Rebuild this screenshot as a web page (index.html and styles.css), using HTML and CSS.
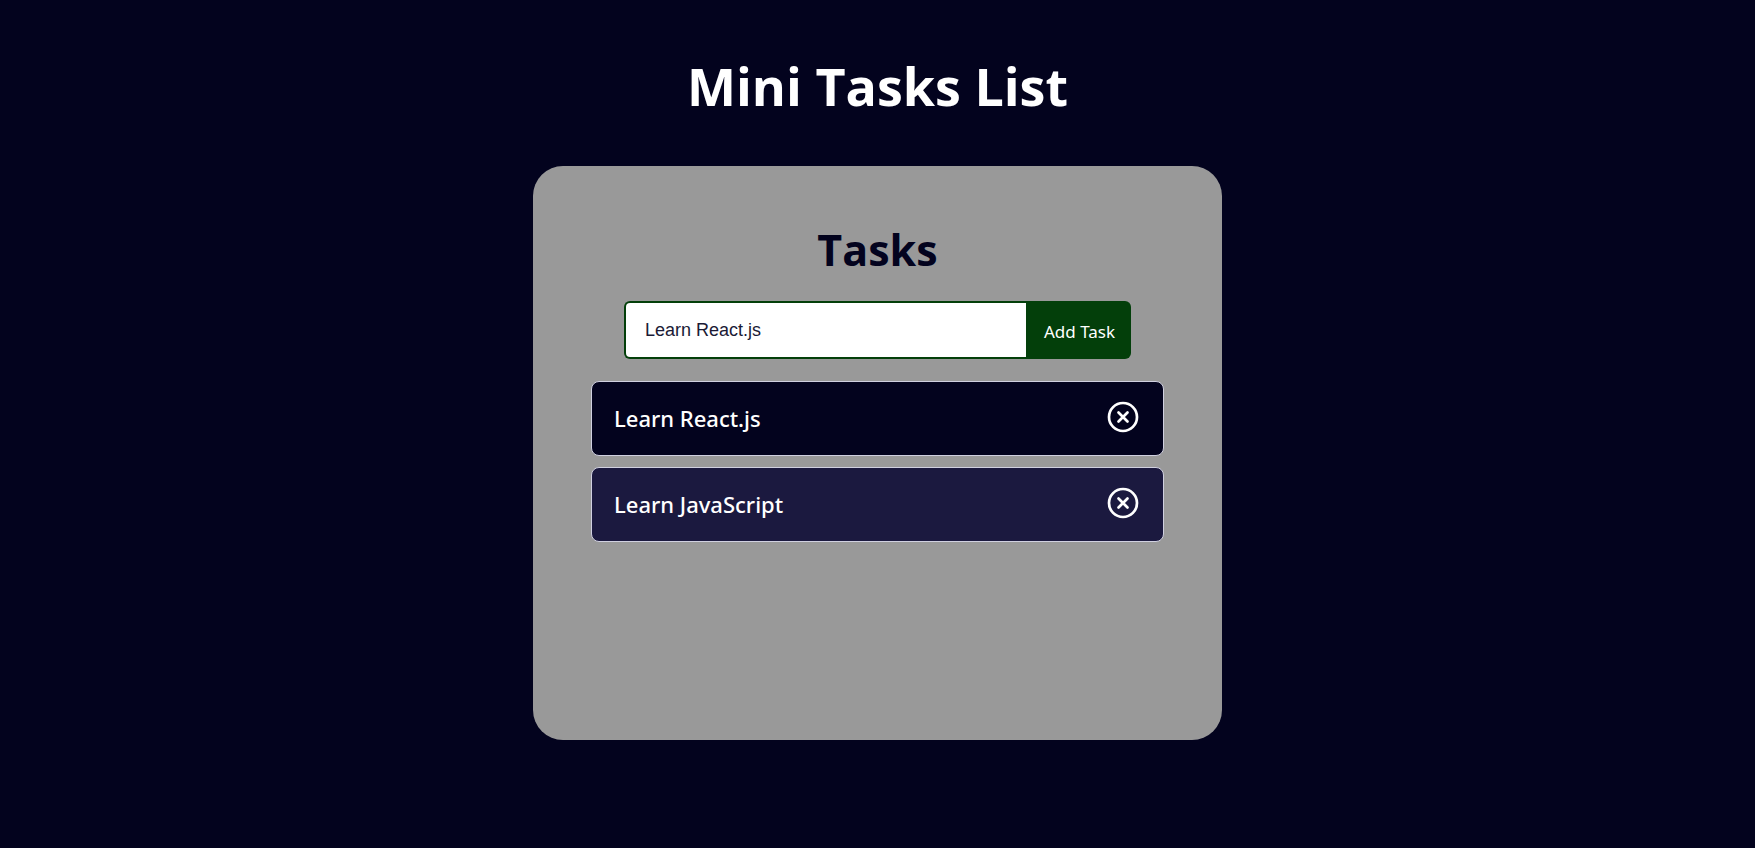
FILE: index.html
```html
<!DOCTYPE html>
<html lang="en">
<head>
<meta charset="utf-8">
<meta name="viewport" content="width=device-width, initial-scale=1">
<title>Mini Tasks List</title>
<link rel="stylesheet" href="styles.css">
</head>
<body>
<main class="app">
  <h1 class="app-title">Mini Tasks List</h1>
  <section class="card">
    <h2 class="card-title">Tasks</h2>
    <form class="task-form">
      <input class="task-input" type="text" value="Learn React.js" aria-label="New task">
      <button class="add-button" type="submit">Add Task</button>
    </form>
    <ul class="task-list">
      <li class="task">
        <span class="task-name">Learn React.js</span>
        <button class="remove-button" type="button" aria-label="Remove Learn React.js">
          <svg class="remove-icon" viewBox="0 0 32 32" aria-hidden="true"><circle cx="16" cy="16" r="14"/><path d="M11.5 11.5l9 9M20.5 11.5l-9 9"/></svg>
        </button>
      </li>
      <li class="task task-alt">
        <span class="task-name">Learn JavaScript</span>
        <button class="remove-button" type="button" aria-label="Remove Learn JavaScript">
          <svg class="remove-icon" viewBox="0 0 32 32" aria-hidden="true"><circle cx="16" cy="16" r="14"/><path d="M11.5 11.5l9 9M20.5 11.5l-9 9"/></svg>
        </button>
      </li>
    </ul>
  </section>
</main>
</body>
</html>
```
FILE: styles.css
```css
* {
  box-sizing: border-box;
}

body {
  margin: 0;
  min-height: 100vh;
  background: #03031e;
  font-family: "Segoe UI", "Open Sans", "Noto Sans", sans-serif;
}

.app {
  display: flex;
  flex-direction: column;
  align-items: center;
  padding: 50px 20px;
}

.app-title {
  margin: 0 0 44px;
  color: #fff;
  font-size: 52px;
  line-height: 72px;
}

.card {
  width: 100%;
  max-width: 689px;
  min-height: 574px;
  padding: 54px 58px;
  border-radius: 30px;
  background: #999;
}

.card-title {
  margin: 0 0 21px;
  color: #03031e;
  font-size: 43px;
  line-height: 60px;
  text-align: center;
}

.task-form {
  display: flex;
  height: 58px;
  margin: 0 33px 22px;
}

.task-input {
  flex: 1;
  min-width: 0;
  padding: 0 19px;
  border: 2px solid #033f0a;
  border-right: 0;
  border-radius: 6px 0 0 6px;
  background: #fff;
  color: #1a1a35;
  font: 18px "Liberation Sans", Arial, sans-serif;
}

.add-button {
  padding: 2px 16px 0 18px;
  border: 0;
  border-radius: 0 6px 6px 0;
  background: #033f0a;
  color: #fff;
  font: 17px "Noto Sans", sans-serif;
}

.task-list {
  display: grid;
  gap: 11px;
  margin: 0;
  padding: 0;
  list-style: none;
}

.task {
  display: flex;
  align-items: center;
  justify-content: space-between;
  min-height: 75px;
  padding: 0 24px 4px 22px;
  border: 1px solid #d0d0e0;
  border-radius: 8px;
  background: #03031e;
  color: #fff;
}

.task-alt {
  background: #1b193f;
}

.task-name {
  padding-top: 2px;
  font: 500 22px "Noto Sans", sans-serif;
}

.remove-button {
  display: flex;
  padding: 0;
  border: 0;
  background: none;
  color: inherit;
}

.remove-icon {
  width: 32px;
  height: 32px;
  fill: none;
  stroke: currentColor;
  stroke-width: 2.7;
  stroke-linecap: round;
}
```
